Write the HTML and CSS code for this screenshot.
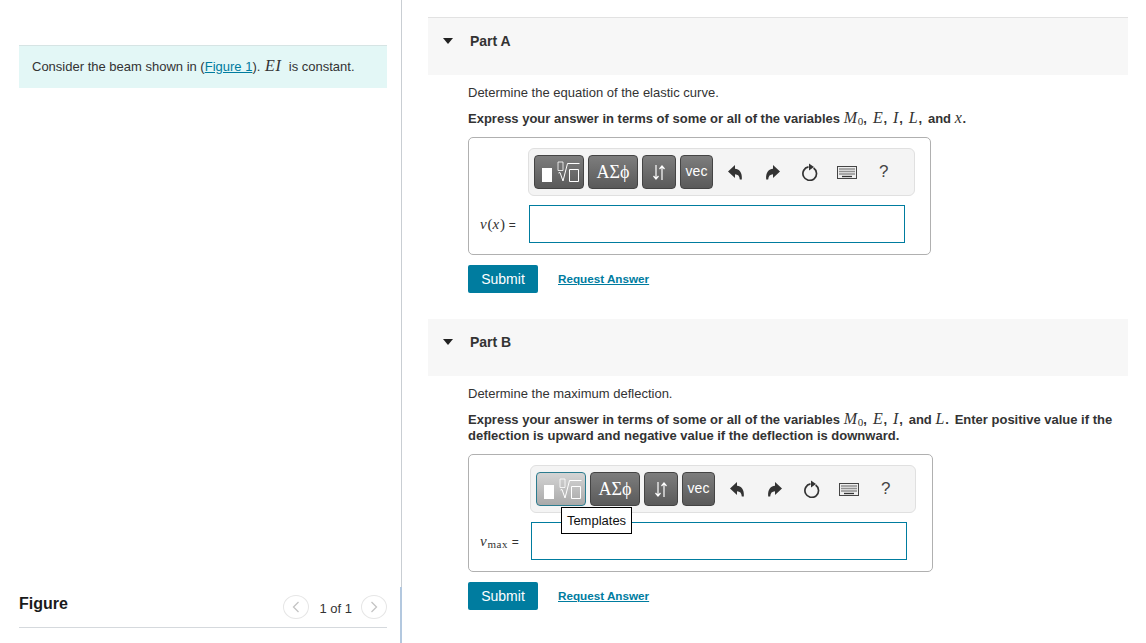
FILE: index.html
```html
<!DOCTYPE html>
<html lang="en">
<head>
<meta charset="utf-8">
<title>Beam problem</title>
<link rel="stylesheet" href="styles.css">
</head>
<body>
<div class="page">
  <aside class="left">
    <div class="intro">Consider the beam shown in (<a href="#">Figure 1</a>). <span class="m big">EI</span> is constant.</div>
    <div class="figure-head">
      <h2>Figure</h2>
      <div class="pager">
        <span class="circle"><svg width="8" height="12" viewBox="0 0 8 12"><path d="M6.500 1 1.500 6l5 5" fill="none" stroke="#c4c4c4" stroke-width="1.300"/></svg></span>
        <span class="count">1 of 1</span>
        <span class="circle"><svg width="8" height="12" viewBox="0 0 8 12"><path d="M1.500 1l5 5-5 5" fill="none" stroke="#c4c4c4" stroke-width="1.300"/></svg></span>
      </div>
    </div>
    <div class="scroll-mark"></div>
  </aside>
  <main class="right">
    <section class="part part-a">
      <header class="part-head"><span class="tri"></span><h3>Part A</h3></header>
      <div class="part-body">
        <p class="q">Determine the equation of the elastic curve.</p>
        <p class="inst">Express your answer in terms of some or all of the variables <span class="m">M<sub>0</sub></span><span class="c">,</span> <span class="m">E</span><span class="c">,</span> <span class="m">I</span><span class="c">,</span> <span class="m">L</span><span class="c">,</span> and <span class="m">x</span>.</p>
        <div class="answer">
          <div class="toolbar">
            <span class="btn b-wide"><svg width="48" height="32" viewBox="0 0 48 32"><rect x="7" y="12" width="10" height="14" fill="#fff"/><path d="M23 6h5v8.500h-5z" fill="none" stroke="#fff" stroke-width=".8"/><path d="M23.500 17l1.500-.5 3 8.500 4.500-17.500h12" fill="none" stroke="#fff" stroke-width="1"/><path d="M34.500 13.500h9v12h-9z" fill="none" stroke="#fff" stroke-width="1"/></svg></span>
            <span class="btn b-wide greek">ΑΣϕ</span>
            <span class="btn b-arrows"><svg width="16" height="18" viewBox="0 0 16 18"><path d="M5 2v14M2.500 13 5 16l2.500-3M11 17V3M8.500 6 11 3l2.500 3" fill="none" stroke="#fff" stroke-width="1.200"/></svg></span>
            <span class="btn b-vec">vec</span>
            <span class="tools">
              <svg class="tool" width="16" height="16" viewBox="0 0 16 16"><path d="M1 7.500 8 1v3.800c4 .2 7.500 3.500 6.800 10.700h-2C12.500 12 11 10.500 8 10.300V14z" fill="#333"/></svg>
              <svg class="tool" width="16" height="16" viewBox="0 0 16 16"><path d="M15 7.500 8 1v3.800c-4 .2-7.500 3.500-6.800 10.700h2C3.500 12 5 10.500 8 10.300V14z" fill="#333"/></svg>
              <svg class="tool" width="18" height="18" viewBox="0 0 18 18"><path d="M12.600 5a6.800 6.800 0 1 1-5.100-1.100" fill="none" stroke="#333" stroke-width="1.700"/><path d="M8 .5v7l5-3.500z" fill="#333"/></svg>
              <svg class="tool" width="20" height="13" viewBox="0 0 20 13"><rect x=".5" y=".5" width="19" height="12" fill="#eee" stroke="#444"/><path d="M2.500 3h15M2.500 5.500h15M2.500 8h15" stroke="#333" stroke-width="1.400" stroke-dasharray="1 1"/><path d="M5 10.500h10" stroke="#333" stroke-width="1.300"/></svg>
              <span class="help">?</span>
            </span>
          </div>
          <div class="line">
            <span class="lhs"><span class="m">v</span>(<span class="m">x</span>) <span class="eq">=</span></span>
            <div class="input"></div>
          </div>
        </div>
        <div class="actions"><span class="submit">Submit</span><a class="req" href="#">Request Answer</a></div>
      </div>
    </section>
    <section class="part part-b">
      <header class="part-head"><span class="tri"></span><h3>Part B</h3></header>
      <div class="part-body">
        <p class="q">Determine the maximum deflection.</p>
        <p class="inst">Express your answer in terms of some or all of the variables <span class="m">M<sub>0</sub></span><span class="c">,</span> <span class="m">E</span><span class="c">,</span> <span class="m">I</span><span class="c">,</span> and <span class="m">L</span><span class="c">.</span> Enter positive value if the deflection is upward and negative value if the deflection is downward.</p>
        <div class="answer answer-b">
          <div class="toolbar">
            <span class="btn b-wide active"><svg width="48" height="32" viewBox="0 0 48 32"><rect x="7" y="12" width="10" height="14" fill="#fff"/><path d="M23 6h5v8.500h-5z" fill="none" stroke="#fff" stroke-width=".8"/><path d="M23.500 17l1.500-.5 3 8.500 4.500-17.500h12" fill="none" stroke="#fff" stroke-width="1"/><path d="M34.500 13.500h9v12h-9z" fill="none" stroke="#fff" stroke-width="1"/></svg>
              <span class="tooltip">Templates</span></span>
            <span class="btn b-wide greek">ΑΣϕ</span>
            <span class="btn b-arrows"><svg width="16" height="18" viewBox="0 0 16 18"><path d="M5 2v14M2.500 13 5 16l2.500-3M11 17V3M8.500 6 11 3l2.500 3" fill="none" stroke="#fff" stroke-width="1.200"/></svg></span>
            <span class="btn b-vec">vec</span>
            <span class="tools">
              <svg class="tool" width="16" height="16" viewBox="0 0 16 16"><path d="M1 7.500 8 1v3.800c4 .2 7.500 3.500 6.800 10.700h-2C12.500 12 11 10.500 8 10.300V14z" fill="#333"/></svg>
              <svg class="tool" width="16" height="16" viewBox="0 0 16 16"><path d="M15 7.500 8 1v3.800c-4 .2-7.500 3.500-6.800 10.700h2C3.500 12 5 10.500 8 10.300V14z" fill="#333"/></svg>
              <svg class="tool" width="18" height="18" viewBox="0 0 18 18"><path d="M12.600 5a6.800 6.800 0 1 1-5.100-1.100" fill="none" stroke="#333" stroke-width="1.700"/><path d="M8 .5v7l5-3.500z" fill="#333"/></svg>
              <svg class="tool" width="20" height="13" viewBox="0 0 20 13"><rect x=".5" y=".5" width="19" height="12" fill="#eee" stroke="#444"/><path d="M2.500 3h15M2.500 5.500h15M2.500 8h15" stroke="#333" stroke-width="1.400" stroke-dasharray="1 1"/><path d="M5 10.500h10" stroke="#333" stroke-width="1.300"/></svg>
              <span class="help">?</span>
            </span>
          </div>
          <div class="line">
            <span class="lhs"><span class="m">v</span><span class="sub">max</span> <span class="eq">=</span></span>
            <div class="input"></div>
          </div>
        </div>
        <div class="actions"><span class="submit">Submit</span><a class="req" href="#">Request Answer</a></div>
      </div>
    </section>
  </main>
</div>
</body>
</html>
```
FILE: styles.css
```css
* { box-sizing: border-box; }
html, body { margin: 0; height: 643px; overflow: hidden; background: #fff; }
body { font-family: "Liberation Sans", Arial, sans-serif; font-size: 13px; color: #333; }
.page { display: flex; height: 643px; }
.left { position: relative; width: 402px; flex: none; padding: 45px 14px 0 19px; border-right: 1px solid #c9ced3; }
.intro { height: 43px; background: #e3f7f6; border-top: 1px solid #d6e4e4; padding: 12px 13px 0; line-height: 18px; font-size: 13px; white-space: nowrap; }
a { color: #007c9f; }
.m { font-family: "Liberation Serif", "DejaVu Serif", serif; font-style: italic; font-weight: 400; font-size: 16px; line-height: 0; letter-spacing: .8px; }
.big { font-size: 16px; margin: 0 3.500px 0 1px; }
.m sub { font-size: 11px; font-style: normal; line-height: 0; vertical-align: -2px; letter-spacing: 0; }
.c { margin-right: 2.300px; }
.figure-head { display: flex; justify-content: space-between; margin-top: 504px; height: 36px; border-bottom: 1px solid #d5d9dd; }
h2 { margin: 3px 0 0; font-size: 16px; line-height: 18px; color: #1a1a1a; }
.pager { display: flex; align-items: flex-start; padding-top: 3px; }
.circle { width: 26px; height: 24px; border: 1px solid #e6e6e6; border-radius: 50%; display: flex; align-items: center; justify-content: center; }
.count { margin: 6px 9px 0 10px; font-size: 13px; line-height: 16px; }
.scroll-mark { position: absolute; right: -1px; top: 587px; width: 2px; height: 56px; background: #b3c8df; }
.right { width: 700px; margin-left: 26px; padding-top: 17px; }
.part-a { height: 302px; }
.part-head { height: 58px; background: #f7f7f7; border-top: 1px solid #e2e2e2; display: flex; align-items: flex-start; padding: 14px 0 0 15px; }
.part-b .part-head { height: 57px; border-top: 0; padding-top: 14px; }
.tri { width: 0; height: 0; margin-top: 6px; border-left: 5px solid transparent; border-right: 5px solid transparent; border-top: 6px solid #222; }
h3 { margin: 0 0 0 17px; font-size: 14px; line-height: 18px; color: #333; }
.part-body { padding: 10px 0 0 40px; }
p { margin: 0; }
.q { line-height: 15px; }
.inst { margin-top: 11px; font-weight: 700; line-height: 16px; min-height: 16px; }
.answer { margin-top: 10px; width: 463px; height: 118px; border: 1px solid #b0b0b0; border-radius: 5px; padding: 10px 0 0 59px; }
.answer-b { width: 465px; height: 118px; margin-top: 10px; padding: 10px 0 0 61px; }
.toolbar { display: flex; align-items: center; width: 387px; height: 48px; padding: 0 5px; gap: 4px; background: #f4f4f4; border: 1px solid #e0e0e0; border-radius: 6px; }
.answer-b .toolbar { width: 386px; }
.btn { position: relative; height: 34px; border: 1px solid #444; border-radius: 4px; background: linear-gradient(#7d7d7d, #5a5a5a); color: #fff; display: flex; align-items: center; justify-content: center; flex: none; }
.b-wide { width: 50px; }
.b-arrows { width: 34px; }
.b-vec { width: 33px; font-size: 14px; padding-bottom: 2px; }
.greek { font-family: "Liberation Serif", "DejaVu Serif", serif; font-size: 18px; }
.active { background: linear-gradient(#d4d4d4, #a9a9a9); border-color: #2b7c8f; }
.tooltip { position: absolute; left: 24px; top: 34px; width: 71px; height: 27px; background: #fff; border: 1px solid #000; color: #111; font-size: 13px; line-height: 25px; text-align: center; z-index: 2; }
.tools { display: flex; align-items: center; margin-left: 10px; }
.tool { flex: none; }
.tool:nth-child(1) { margin-right: 22px; }
.tool:nth-child(2) { margin-right: 20px; }
.tool:nth-child(3) { margin-right: 18px; }
.tool:nth-child(4) { margin-right: 22px; }
.help { font-size: 17px; color: #444; }
.line { display: flex; align-items: center; margin-top: 9px; height: 38px; margin-left: -48px; }
.lhs { width: 49px; flex: none; font-family: "Liberation Serif", "DejaVu Serif", serif; font-size: 15px; white-space: nowrap; padding-top: 1px; }
.lhs .m { font-size: 15px; }
.eq { font-family: "Liberation Sans", Arial, sans-serif; font-size: 12px; }
.sub { font-size: 11px; letter-spacing: .5px; position: relative; top: 2px; }
.answer-b .line { margin-left: -50px; }
.answer-b .lhs { width: 51px; }
.input { width: 376px; height: 38px; background: #fff; border: 1px solid #007c9f; }
.actions { display: flex; align-items: center; margin-top: 10px; height: 28px; }
.submit { width: 70px; height: 28px; background: #007c9f; color: #fff; border-radius: 2px; font-size: 14px; line-height: 28px; text-align: center; }
.req { margin: 0 0 2px 20px; font-size: 11.700px; font-weight: 700; }
```
